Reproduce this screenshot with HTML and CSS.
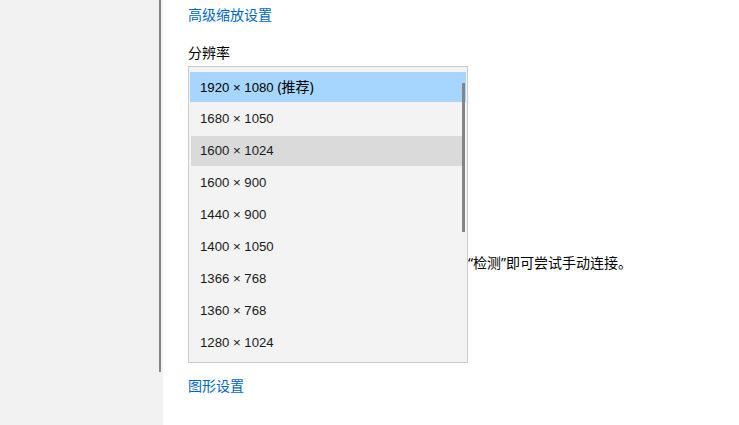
FILE: index.html
```html
<!DOCTYPE html>
<html lang="zh-CN">
<head>
<meta charset="utf-8">
<title>显示设置</title>
<link rel="stylesheet" href="styles.css">
</head>
<body>
<div class="app">
  <aside class="sidebar">
    <div class="sidebar-scroll"><div class="thumb"></div></div>
  </aside>
  <main class="main">
    <a class="link top-link" href="#">高级缩放设置</a>
    <div class="label">分辨率</div>
    <div class="field">
      <div class="popup">
        <ul class="options">
          <li class="opt selected">1920 × 1080 <span class="cjk">(推荐)</span></li>
          <li class="opt">1680 × 1050</li>
          <li class="opt hover">1600 × 1024</li>
          <li class="opt">1600 × 900</li>
          <li class="opt">1440 × 900</li>
          <li class="opt">1400 × 1050</li>
          <li class="opt">1366 × 768</li>
          <li class="opt">1360 × 768</li>
          <li class="opt">1280 × 1024</li>
        </ul>
        <div class="popup-scroll"></div>
      </div>
    </div>
    <p class="note">“检测”即可尝试手动连接。</p>
    <a class="link bottom-link" href="#">图形设置</a>
  </main>
</div>
</body>
</html>
```

FILE: styles.css
```css
html, body {
  margin: 0;
  padding: 0;
  background: #ffffff;
  font-family: "Noto Sans", "Noto Sans CJK SC", sans-serif;
  font-size: 14px;
  color: #000000;
}

.app {
  display: flex;
  height: 425px;
  overflow: hidden;
}

.sidebar {
  width: 163px;
  flex: 0 0 163px;
  background: #f2f2f2;
  display: flex;
  justify-content: flex-end;
}

.sidebar-scroll {
  width: 3px;
  margin-right: 1px;
}

.sidebar-scroll .thumb {
  width: 2px;
  height: 372px;
  background: #858585;
}

.main {
  flex: 1;
  padding: 5px 0 0 25px;
  display: flex;
  flex-direction: column;
  align-items: flex-start;
}

.link {
  color: #0067c0;
  text-decoration: none;
  line-height: 20px;
}

.label {
  margin-top: 18px;
  line-height: 20px;
}

.field {
  position: relative;
  margin-top: 3px;
  width: 280px;
  height: 32px;
}

.popup {
  position: absolute;
  top: 0;
  left: 0;
  width: 280px;
  height: 297px;
  box-sizing: border-box;
  border: 1px solid #cccccc;
  background: #f3f3f3;
  z-index: 2;
}

.options {
  list-style: none;
  margin: 0;
  padding: 5px 1px 0 1px;
  display: flex;
  flex-direction: column;
  gap: 2px;
}

.opt {
  height: 30px;
  line-height: 29px;
  padding-left: 10px;
  color: #1a1a1a;
  font-family: "Liberation Sans", "Noto Sans CJK SC", sans-serif;
  font-size: 13.2px;
}

.opt .cjk {
  font-family: "Noto Sans", "Noto Sans CJK SC", sans-serif;
  font-size: 14px;
}

.opt.selected {
  background: #a6d6fe;
  color: #000;
}

.opt.hover {
  background: #dadada;
  margin: 0 2px 0 1px;
  padding-left: 9px;
}

.popup-scroll {
  position: absolute;
  top: 16px;
  right: 2px;
  width: 3px;
  height: 149px;
  background: #858585;
}

.note {
  margin: 155px 0 0 280px;
  line-height: 20px;
}

.bottom-link {
  margin-top: 103px;
}
```
